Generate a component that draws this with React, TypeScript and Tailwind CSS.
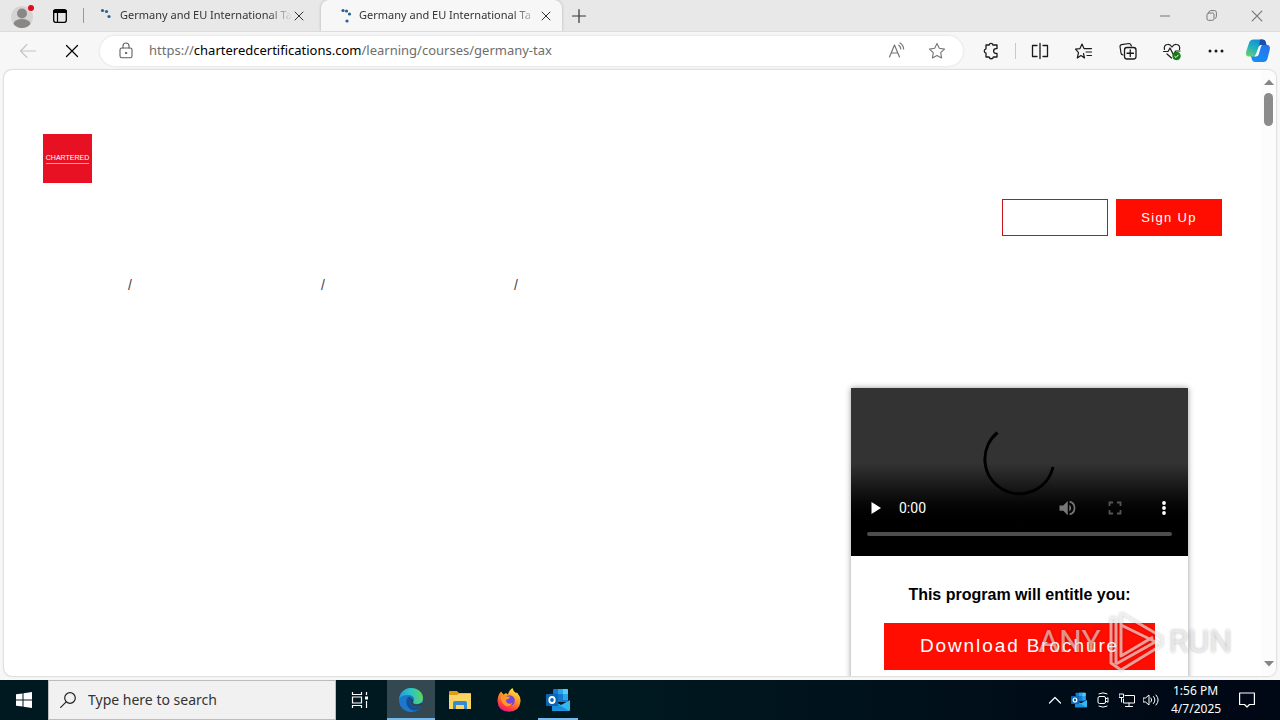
import type { ReactNode } from 'react';

type IconProps = { children: ReactNode; className?: string; box?: string };

function Icon({ children, className = 'size-5', box = '0 0 20 20' }: IconProps) {
  return (
    <svg
      viewBox={box}
      className={`shrink-0 ${className}`}
      fill="none"
      stroke="currentColor"
      strokeLinecap="round"
      strokeLinejoin="round"
      aria-hidden="true"
    >
      {children}
    </svg>
  );
}

const STAR = 'M10 2.6 12.3 7.3 17.5 8.1 13.7 11.7 14.6 16.9 10 14.5 5.4 16.9 6.3 11.7 2.5 8.1 7.7 7.3Z';

function CloseIcon({ className }: { className: string }) {
  return (
    <Icon className={className} box="0 0 10 10">
      <path d="M1 1 9 9M9 1 1 9" />
    </Icon>
  );
}

function Tab({ active, dots }: { active?: boolean; dots: [number, number][] }) {
  return (
    <div
      className={
        active
          ? 'flex w-[241px] items-center rounded-t-lg bg-[#f7f7f7] pr-2 pl-[18px] shadow-[0_0_3px_rgba(0,0,0,0.25)]'
          : 'flex w-[237px] items-center pr-[14px] pl-4'
      }
    >
      <svg viewBox="0 0 16 16" className="mr-1 size-4 shrink-0" aria-hidden="true">
        {dots.map(([x, y]) => (
          <circle key={`${x}-${y}`} cx={x} cy={y} r="1.6" fill="#2b5f94" />
        ))}
      </svg>
      <span className="flex-1 [mask-image:linear-gradient(to_right,black_86%,transparent)] text-[11px] whitespace-nowrap text-[#333]">
        Germany and EU International Ta
      </span>
      <button type="button" aria-label="Close tab" className="flex size-4 items-center justify-center text-[#333]">
        <CloseIcon className="size-[10px]" />
      </button>
    </div>
  );
}

function TabStrip() {
  return (
    <header className="flex h-8 shrink-0 items-stretch overflow-hidden border-b border-[#dcdcdc] bg-[#e8e8e8]">
      <button type="button" aria-label="Profile" className="flex w-11 items-center justify-center">
        <svg viewBox="0 0 24 24" className="size-6" aria-hidden="true">
          <circle cx="12" cy="13" r="11" fill="#d6d4d2" />
          <circle cx="12" cy="9.5" r="5" fill="#8a8886" />
          <path d="M3.5 20a8.5 5 0 0 1 17 0 11 11 0 0 1-17 0Z" fill="#8a8886" />
          <circle cx="21" cy="4" r="3" fill="#e00b1c" />
        </svg>
      </button>
      <button type="button" aria-label="Tab actions" className="flex w-8 items-center justify-center text-black">
        <Icon className="size-4" box="0 0 16 16">
          <rect x="1.7" y="1.7" width="12.6" height="12.6" rx="2" strokeWidth="1.3" />
          <path d="M2 3h12M2 4h12" strokeWidth="2" />
          <path d="M5.5 5v9" strokeWidth="1.2" />
        </Icon>
      </button>
      <span className="my-2 ml-[7px] w-px bg-[#999]" />
      <Tab dots={[[2.5, 2.5], [6.5, 3.5], [9, 8.5]]} />
      <Tab active dots={[[4, 2.5], [7.5, 3], [10.5, 6], [8, 13]]} />
      <button type="button" aria-label="New tab" className="flex w-[34px] items-center justify-center text-[#333]">
        <Icon className="size-4" box="0 0 16 16">
          <path d="M8 1.5v13M1.5 8h13" strokeWidth="1.2" />
        </Icon>
      </button>
      <div className="ml-auto flex text-[#777]">
        <button type="button" aria-label="Minimize" className="flex w-[46px] items-center justify-center">
          <Icon className="size-[10px]" box="0 0 10 10"><path d="M0 5h10" /></Icon>
        </button>
        <button type="button" aria-label="Restore" className="flex w-[46px] items-center justify-center">
          <Icon className="size-[11px]" box="0 0 11 11">
            <rect x="1" y="3" width="7" height="7.3" rx="1.5" />
            <path d="M3 1.8Q3.400 .6 4.600.6H8.500Q10.400.6 10.400 2.500V6.500Q10.400 8 9.400 8.400" />
          </Icon>
        </button>
        <button type="button" aria-label="Close window" className="flex w-[46px] items-center justify-center">
          <CloseIcon className="size-3" />
        </button>
      </div>
    </header>
  );
}

function ToolButton({ label, children }: { label: string; children: ReactNode }) {
  return (
    <button type="button" aria-label={label} className="flex w-11 shrink-0 items-center justify-center text-[#1a1a1a]">
      {children}
    </button>
  );
}

function Copilot() {
  return (
    <svg viewBox="0 0 26 26" className="size-[26px]" aria-hidden="true">
      <defs>
        <linearGradient id="cpA" x1="0.6" y1="0" x2="0.2" y2="1">
          <stop offset="0" stopColor="#1191d8" />
          <stop offset="0.5" stopColor="#22b3bd" />
          <stop offset="1" stopColor="#6ccf6a" />
        </linearGradient>
        <linearGradient id="cpB" x1="0.7" y1="0" x2="0.2" y2="1">
          <stop offset="0" stopColor="#2b6de8" />
          <stop offset="1" stopColor="#1590f5" />
        </linearGradient>
      </defs>
      <path d="M14 2h4q2 0 2.600 2L21.500 7H23q2.500 1 1.800 4.500l-2.300 9q-1 3.500-4 3.500H10q-2.500 0-3.300-3L6 18h6l4-11Z" fill="url(#cpB)" />
      <path d="M8.500 1.500H18q-2 1-2.800 4L12 15.500q-.8 3-4 3H4Q0 18.500 1.200 13.500L4 5q1-3.500 4.500-3.500Z" fill="url(#cpA)" />
      <path d="M15 1.500h3q2 0 2.600 2L21.500 7H17q-2 0-3 2Z" fill="#174fae" />
      <path d="M13.800 8.500q.8-1.500 2.200-1.500h1.200q-1 .8-1.500 2.500l-2 7q-.7 2-2.700 2H9q1.300-.7 2-2.500Z" fill="#fff" />
    </svg>
  );
}

function Toolbar() {
  return (
    <nav className="flex h-[38px] shrink-0 items-center bg-[#f7f7f7]" aria-label="Browser toolbar">
      <div className="flex w-[100px] shrink-0 pl-[6px]">
        <button type="button" aria-label="Back" className="flex w-11 items-center justify-center text-[#c4c4c4]">
          <Icon className="size-5"><path d="M17.500 10H2.500M9 3.500 2.500 10 9 16.500" strokeWidth="1.100" /></Icon>
        </button>
        <button type="button" aria-label="Stop loading" className="flex w-11 items-center justify-center text-black">
          <Icon className="size-[14px]" box="0 0 14 14"><path d="M1.500 1.500l11 11M12.500 1.500l-11 11" strokeWidth="1.200" /></Icon>
        </button>
      </div>
      <div className="flex h-[30px] min-w-0 flex-1 items-center rounded-full bg-white pr-4 pl-4 shadow-[0_0_3px_rgba(0,0,0,0.12)]">
        <Icon className="mr-[13px] size-5 text-[#5f5f5f]">
          <rect x="4" y="7" width="12" height="9.800" rx="1.800" strokeWidth="1.100" />
          <path d="M7 7V5a3 3 0 0 1 6 0v2" strokeWidth="1.100" />
          <circle cx="10" cy="12" r="0.700" fill="currentColor" />
        </Icon>
        <div className="min-w-0 flex-1 truncate text-[13px] text-[#6e6e6e]">
          https://<span className="text-black">charteredcertifications.com</span>/learning/courses/germany-tax
        </div>
        <div className="flex gap-5 text-[#767676]">
          <button type="button" aria-label="Read aloud">
            <Icon>
              <path d="M2.500 16 7.500 4 12.500 16M4.200 12h6.600" strokeWidth="1.200" />
              <path d="M11.800 4.200q1.900 1.300 2 3.800M13 2q3.400 2 3.600 6" strokeWidth="1.200" />
            </Icon>
          </button>
          <button type="button" aria-label="Add to favorites">
            <Icon><path d={STAR} strokeWidth="1.100" /></Icon>
          </button>
        </div>
      </div>
      <div className="ml-[6px] flex items-center">
        <div className="flex items-center">
          <ToolButton label="Extensions">
            <Icon>
              <path d="M6 4h2.100a2 2 0 0 1 3.900 0H16v3.600h-1a2.400 2.400 0 0 0 0 4.800h1V16h-3.600a2.200 2.200 0 0 1-4.300 0H5v-3.900a2.200 2.200 0 0 1 0-4.300V4Z" strokeWidth="1.300" />
            </Icon>
          </ToolButton>
          <span className="mx-[2px] h-4 w-px bg-[#c8c8c8]" />
          <ToolButton label="Split screen">
            <Icon>
              <path d="M7 4.500H2.500v11H7M13 4.500h4.500v11H13M10 2.500v15" strokeWidth="1.300" />
            </Icon>
          </ToolButton>
        </div>
        <ToolButton label="Favorites">
          <Icon>
            <path d="M9.500 12.500 10.500 17 7 14.500 3.300 17 4.500 11.700 1.500 8.200 6 7.600 8 3l2 4.600h7.500M12 11h5.500M13 14.500h4.500" strokeWidth="1.200" />
          </Icon>
        </ToolButton>
        <ToolButton label="Collections">
          <Icon>
            <path d="M5 14Q3 13.500 3 12L2 5.500Q2 4 3.500 3.700L11 2.500q1.500 0 2 1.500l.3 1" strokeWidth="1.200" />
            <rect x="6.500" y="6.500" width="11.500" height="11.500" rx="2.500" strokeWidth="1.300" />
            <path d="M12.250 9v6.500M9 12.250h6.500" strokeWidth="1.300" />
          </Icon>
        </ToolButton>
        <ToolButton label="Browser essentials">
          <Icon>
            <path d="M2.500 8.500Q1.500 4 5.500 3.500 8 3 10 6q2-3 4.500-2.500Q18.500 4 17.500 8.500M1.500 10.500H6L8 7l3.500 7 2-4H18M5 13l4.500 4" strokeWidth="1.200" />
            <circle cx="14.500" cy="15" r="3.900" fill="#107c10" stroke="#107c10" strokeWidth="0.400" />
            <path d="m12.800 15.500 1.200 1 2.300-2.500" stroke="#fff" strokeWidth="1" />
          </Icon>
        </ToolButton>
        <ToolButton label="Settings and more">
          <Icon>
            <g fill="currentColor" stroke="none">
              <circle cx="4" cy="10" r="1.500" />
              <circle cx="10" cy="10" r="1.500" />
              <circle cx="16" cy="10" r="1.500" />
            </g>
          </Icon>
        </ToolButton>
        <button type="button" aria-label="Copilot" className="mr-[9px] ml-[7px]"><Copilot /></button>
      </div>
    </nav>
  );
}

function VideoPlayer() {
  return (
    <div className="relative flex h-[168px] flex-col justify-end bg-linear-to-b from-[#333] from-45% to-black to-85% px-4 pb-5">
      <svg viewBox="0 0 74 74" className="absolute top-[37px] left-[131px] size-[74px]" fill="none" aria-hidden="true">
        <path d="M15.500 7.500A34.500 34.500 0 1 0 71 42" stroke="#000" strokeWidth="3" />
      </svg>
      <div className="flex items-center text-white">
        <button type="button" aria-label="Play" className="w-8">
          <svg viewBox="0 0 18 18" className="size-[18px]" aria-hidden="true"><path d="M4.500 3v12l9.500-6Z" fill="#fff" /></svg>
        </button>
        <span className="font-['Roboto',sans-serif] text-sm">0:00</span>
        <div className="ml-auto flex gap-[30px]">
          <button type="button" aria-label="Mute" className="text-[#777]">
            <svg viewBox="0 0 24 24" className="size-[18px]" fill="currentColor" aria-hidden="true">
              <path d="M2 8.500v7h5l6 6v-19l-6 6Z" />
              <path d="M15 7.500v9q2.500-1.500 2.500-4.500T15 7.500Z" />
              <path d="M15.500 3.500a8.800 8.800 0 0 1 0 17" fill="none" stroke="currentColor" strokeWidth="2.300" />
            </svg>
          </button>
          <button type="button" aria-label="Full screen" className="text-[#555]">
            <svg viewBox="0 0 18 18" className="size-[18px]" fill="none" stroke="currentColor" strokeWidth="1.800" aria-hidden="true">
              <path d="M3.500 7V3.500H7M11 3.500h3.500V7M14.500 11v3.500H11M7 14.500H3.500V11" />
            </svg>
          </button>
          <button type="button" aria-label="More options">
            <svg viewBox="0 0 18 18" className="size-[18px]" fill="#fff" aria-hidden="true">
              <circle cx="10" cy="4" r="1.900" /><circle cx="10" cy="9" r="1.900" /><circle cx="10" cy="14" r="1.900" />
            </svg>
          </button>
        </div>
      </div>
      <div className="mt-[14px] h-1 rounded-full bg-[#4d4d4d]" />
    </div>
  );
}

function Watermark() {
  return (
    <div
      className="pointer-events-none absolute right-11 bottom-1 flex h-[62px] items-center gap-1 font-['Roboto',sans-serif] text-[32px] text-white/55 [text-shadow:0_0_3px_rgba(0,0,0,0.3)]"
    >
      <span>ANY</span>
      <svg viewBox="0 0 60 62" className="h-[62px] w-[60px] drop-shadow-[0_0_1px_rgba(0,0,0,0.35)]" fill="none" stroke="#fff" strokeOpacity="0.6" strokeWidth="3" strokeLinejoin="round" aria-hidden="true">
        <path d="M16 3 57 27v8L16 60 6 53V8h5V54M16 3V46L48 27M16 15 57 35M11 54 52 31" />
      </svg>
      <span>RUN</span>
    </div>
  );
}

function WebPage() {
  return (
    <div className="relative mx-1 mb-1 flex min-h-0 flex-1 overflow-hidden rounded-lg bg-white shadow-[0_0_2px_rgba(0,0,0,0.35)]">
      <main className="min-w-0 flex-1 overflow-hidden px-[39px] font-['Liberation_Sans',Arial,sans-serif]">
        <div className="mt-16 flex size-[49px] flex-col items-center justify-center bg-[#e81123] text-white">
          <span className="text-[7px] leading-[8px]">CHARTERED</span>
          <span className="mt-px h-px w-[43px] bg-white/60" />
        </div>
        <div className="mt-4 flex justify-end gap-2">
          <button type="button" aria-label="Log in" className="h-[37px] w-[106px] border border-[#c4151c]" />
          <button type="button" className="h-[37px] w-[106px] bg-[#ff0d00] text-[13px] tracking-widest text-white">
            Sign Up
          </button>
        </div>
        <ol className="mt-10 flex pr-4 text-sm leading-[18px] text-[#444]">
          <li className="w-[89px] text-right">/</li>
          <li className="w-[193px] text-right">/</li>
          <li className="w-[193px] text-right">/</li>
        </ol>
        <aside className="mt-[94px] mr-[34px] ml-auto w-[337px] bg-white pb-12 shadow-[0_0_6px_rgba(0,0,0,0.4)]">
          <VideoPlayer />
          <div className="flex flex-col items-center px-8 pt-7">
            <h2 className="text-base leading-[22px] font-bold text-black">This program will entitle you:</h2>
            <button type="button" className="mt-[17px] h-[47px] w-[271px] bg-[#ff0d00] text-[19px] tracking-widest text-white">
              Download Brochure
            </button>
          </div>
        </aside>
      </main>
      <div className="flex w-[15px] shrink-0 flex-col items-center bg-[#fcfcfc] pt-2 pb-2" aria-hidden="true">
        <svg viewBox="0 0 10 8" className="h-2 w-[10px]"><path d="M0 7 5 1.500 10 7Z" fill="#858585" /></svg>
        <span className="mt-[7px] h-[33px] w-[9px] rounded-full bg-[#8b8b8b]" />
        <svg viewBox="0 0 10 8" className="mt-auto h-2 w-[10px]"><path d="M0 1 5 6.500 10 1Z" fill="#858585" /></svg>
      </div>
      <Watermark />
    </div>
  );
}

function EdgeLogo() {
  return (
    <svg viewBox="0 0 24 24" className="size-6" aria-hidden="true">
      <defs>
        <linearGradient id="edgeTop" x1="0" y1="0.500" x2="1" y2="0.400">
          <stop offset="0" stopColor="#2298dc" />
          <stop offset="0.500" stopColor="#2bc4c4" />
          <stop offset="1" stopColor="#61d65a" />
        </linearGradient>
      </defs>
      <circle cx="12" cy="12" r="12" fill="#1b78cc" />
      <path d="M0 11C1 4 6 0 12 0c7 0 12 4.500 12 10 0 4-3 6-6.500 6-2.500 0-4-1-3-2.500 2-3-.5-6.500-5-6.500C5 7 1.500 8.500 0 11Z" fill="url(#edgeTop)" />
      <path d="M9 9C5.500 13 7.500 21 14.500 22.500 18.500 22.500 21.500 20 22.500 18c-5 2.500-11 .5-11-4 0-2 1-2.500 1-3.500C12 9 10.500 8.500 9 9Z" fill="#124f96" />
      <path d="M12 10q2.500 1 2.300 3.500-1 1.500.5 2.200 3.500 1.500 7.500-.7l2.500 0-2 2.700c-4.500 2.500-11 .8-11.200-3.500q0-2.500.4-4.200Z" fill="#31444d" />
    </svg>
  );
}

function FolderIcon() {
  return (
    <svg viewBox="0 0 22 18" className="h-[18px] w-[22px]" aria-hidden="true">
      <path d="M0 1Q0 0 1 0h7l2 2h11q1 0 1 1v3H0Z" fill="#e09a15" />
      <path d="M0 4h8l2-1.500h12V18H0Z" fill="#fcd462" />
      <path d="M4 18v-6q0-2 2-2h10q2 0 2 2v6h-3v-4H7v4Z" fill="#338bd0" />
    </svg>
  );
}

function FirefoxIcon() {
  return (
    <svg viewBox="0 0 24 24" className="size-6" aria-hidden="true">
      <defs>
        <linearGradient id="fox" x1="0.800" y1="0" x2="0.300" y2="1">
          <stop offset="0" stopColor="#fff04a" />
          <stop offset="0.450" stopColor="#ff9420" />
          <stop offset="0.800" stopColor="#ff3b45" />
          <stop offset="1" stopColor="#e31587" />
        </linearGradient>
      </defs>
      <path d="M4 3.500 6.500 6.500 9 5 11 6.500Q12 2 15.500 0q.5 3 3.500 5l1-.5Q24 9 23.500 13.500 22.500 23.500 12 23.800 1 23.500.5 13 .5 7.500 4 3.500Z" fill="url(#fox)" />
      <circle cx="12.500" cy="12.500" r="5.300" fill="#7645d9" />
      <path d="M3.500 8.500Q7 7 9 8.500l4 .2q0 2-3.500 2.800Q8 14 11 15.500q3 .7 4.500-1Q14 19 9 18 4.500 16 3.500 8.500Z" fill="#ff9a24" />
    </svg>
  );
}

function OutlookIcon({ className }: { className: string }) {
  return (
    <svg viewBox="0 0 24 22" className={className} aria-hidden="true">
      <rect x="7" y="0" width="15" height="13" rx="1" fill="#1279cd" />
      <path d="M12 0h5v5h-5Z" fill="#2aa5ea" />
      <path d="M17 0h4q1 0 1 1v4h-5Z" fill="#50d0f8" />
      <path d="M17 5h5v6h-5Z" fill="#2aa5ea" />
      <path d="M6 21V11l9 5 9-5v10q0 1-1 1H7q-1 0-1-1Z" fill="#34b8ef" />
      <path d="m6 12 17 9.800H7q-1 0-1-1Z" fill="#188fdc" />
      <rect x="0" y="5" width="12" height="12" rx="1" fill="#0a65b8" />
      <ellipse cx="6" cy="11" rx="2.700" ry="3" fill="none" stroke="#fff" strokeWidth="1.800" />
    </svg>
  );
}

function TaskButton({ label, state = 'w-12', children }: { label: string; state?: string; children: ReactNode }) {
  return (
    <button type="button" aria-label={label} className={`flex shrink-0 items-center justify-center ${state}`}>
      {children}
    </button>
  );
}

function Taskbar() {
  return (
    <footer className="flex h-10 shrink-0 items-stretch bg-linear-to-r from-[#001820] via-[#001820] via-50% to-[#000715] text-white">
      <button type="button" aria-label="Start" className="flex w-12 shrink-0 items-center justify-center">
        <svg viewBox="0 0 16 16" className="size-4" fill="#fff" aria-hidden="true">
          <path d="M0 2.300 6.500 1.400V7.500H0ZM7.500 1.200 16 0V7.500H7.500ZM0 8.500H6.500V14.600L0 13.700ZM7.500 8.500H16V16L7.500 14.800Z" />
        </svg>
      </button>
      <label className="flex w-[288px] shrink-0 items-center border border-[#bdbdbd] bg-[#f1f1f1] pl-[11px] text-[#222]">
        <Icon className="mr-3 size-4" box="0 0 16 16">
          <circle cx="10" cy="6" r="5.300" strokeWidth="1.200" />
          <path d="M6.200 9.800.7 15.300" strokeWidth="1.200" />
        </Icon>
        <input
          type="text"
          aria-label="Search"
          placeholder="Type here to search"
          className="min-w-0 flex-1 bg-transparent text-sm outline-none placeholder:text-[#333]"
        />
      </label>
      <div className="flex gap-px">
        <TaskButton label="Task view" state="w-[50px] pr-[2px]">
          <svg viewBox="0 0 18 16" className="h-4 w-[18px]" fill="none" stroke="#fff" strokeWidth="1.200" aria-hidden="true">
            <path d="M1.500 0v2.500h9V0M1.500 5h9v6h-9ZM1.500 16v-2.500h9V16M15.500 0v3M15.500 9v7" />
            <path d="M14 4.500h3v3h-3Z" fill="#fff" stroke="none" />
          </svg>
        </TaskButton>
        <TaskButton label="Edge" state="w-12 border-b-2 border-[#76b9ed] bg-[#334850] pt-[2px]"><EdgeLogo /></TaskButton>
        <TaskButton label="File Explorer"><FolderIcon /></TaskButton>
        <TaskButton label="Firefox"><FirefoxIcon /></TaskButton>
        <TaskButton label="Outlook" state="mx-1 w-10 border-b-2 border-[#76b9ed] pt-[2px]">
          <OutlookIcon className="h-[22px] w-6" />
        </TaskButton>
      </div>
      <div className="ml-auto flex items-center gap-2">
        <Icon className="size-4" box="0 0 16 16"><path d="m2.500 11 5.500-5.500 5.500 5.500" strokeWidth="1.200" /></Icon>
        <OutlookIcon className="size-4" />
        <Icon className="size-4" box="0 0 16 16">
          <rect x="3" y="4.500" width="7.500" height="7" rx="1.500" />
          <path d="m10.500 7 2.500-1.300v4.600L10.500 9M4 1.800q4-2 8 0M4 14.200q4 2 8 0" />
        </Icon>
        <Icon className="size-4" box="0 0 16 16">
          <path d="M6 3.500h9.500v7.500H4.500V7M10 11v3M6.500 14.500h7M.5 2h4v3.500h-4ZM2.500 5.500v4.500" />
        </Icon>
        <Icon className="size-4" box="0 0 16 16">
          <path d="M.5 6h2L6 3v10L2.500 10h-2ZM8 6q1.500 2 0 4M10.500 4.500q3 3.500 0 7M13 3q4.500 5 0 10" />
        </Icon>
        <div className="ml-1 w-[49px] text-center text-xs leading-[18px] whitespace-nowrap">
          <div>1:56 PM</div>
          <div>4/7/2025</div>
        </div>
        <button type="button" aria-label="Notifications" className="mr-[25px] ml-[11px] flex">
          <Icon className="size-4" box="0 0 16 16">
            <path d="M.6 1h14.800v11.500H10.500L8 15 5.500 12.500H.6Z" strokeWidth="1.200" />
          </Icon>
        </button>
      </div>
    </footer>
  );
}

export default function App() {
  return (
    <div className="flex h-screen flex-col overflow-hidden bg-[#f7f7f7] font-['Noto_Sans',sans-serif]">
      <TabStrip />
      <Toolbar />
      <WebPage />
      <Taskbar />
    </div>
  );
}
